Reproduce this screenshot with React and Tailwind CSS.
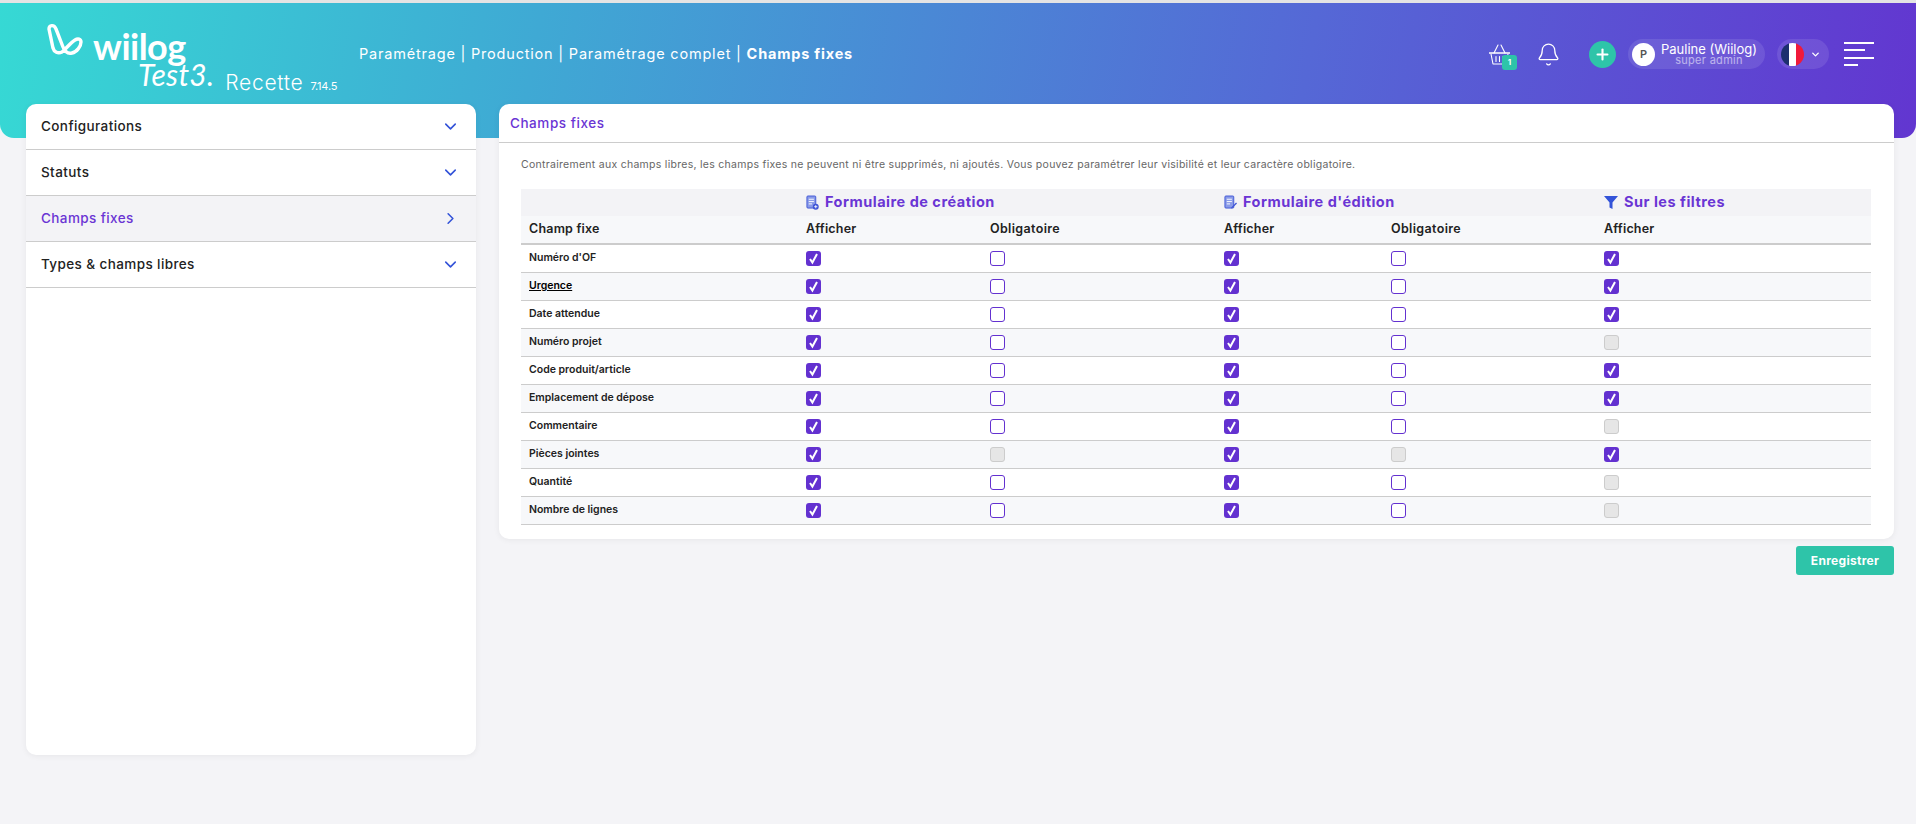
import { Bell, ChevronDown, ChevronRight, Plus } from "lucide-react";

const SIDE_ITEMS = [
  { label: "Configurations" },
  { label: "Statuts" },
  { label: "Champs fixes", active: true },
  { label: "Types & champs libres" },
];

// c = checked, u = unchecked, d = disabled
const ROWS = [
  { label: "Numéro d'OF", cells: "cucuc" },
  { label: "Urgence", cells: "cucuc", underline: true },
  { label: "Date attendue", cells: "cucuc" },
  { label: "Numéro projet", cells: "cucud" },
  { label: "Code produit/article", cells: "cucuc" },
  { label: "Emplacement de dépose", cells: "cucuc" },
  { label: "Commentaire", cells: "cucud" },
  { label: "Pièces jointes", cells: "cdcdc" },
  { label: "Quantité", cells: "cucud" },
  { label: "Nombre de lignes", cells: "cucud" },
];

function Box({ kind }) {
  if (kind === "c") {
    return (
      <span className="flex h-[15px] w-[15px] items-center justify-center rounded-[3px] bg-[#6331d0]">
        <svg viewBox="0 0 15 15" className="h-[15px] w-[15px]" fill="none" stroke="#fff" strokeWidth="2">
          <path d="M4 8l2.4 3.5L11 3" />
        </svg>
      </span>
    );
  }
  if (kind === "d") {
    return <span className="block h-[15px] w-[15px] rounded-[3px] border border-[#cccccc] bg-[#e6e6e6]" />;
  }
  return <span className="block h-[15px] w-[15px] rounded-[3px] border-[1.5px] border-[#6331d0] bg-white" />;
}

function LogoMark() {
  return (
    <svg viewBox="0 0 36 33" className="h-[33px] w-[36px] shrink-0" fill="none" stroke="#fff" strokeWidth="3.4" strokeLinecap="round">
      <path d="M2 6c0-4 5-5 7 0l7 18c2 5 5 7 9 6 5-1 9-7 9-11 0-3-3-4-6-2-5 3-9 9-13 12-4 2-8 0-9-4L2 6z" />
    </svg>
  );
}

function BasketIcon() {
  return (
    <svg viewBox="0 0 21 21" className="h-[21px] w-[21px]" fill="none" stroke="#fff" strokeWidth="1.1" strokeLinecap="round" strokeLinejoin="round">
      <path d="M5 9l4-8M16 9l-4-8" />
      <path d="M0.5 9h20" strokeWidth="1.6" />
      <path d="M2 10l2 10h13l2-10" />
      <path d="M7 12.5v5M10.5 12.5v5M14 12.5v5" />
    </svg>
  );
}

function FormIcon({ edit }) {
  return (
    <svg viewBox="0 0 14 16" className="h-[15px] w-[13px]">
      <rect x="1" y="1" width="9.5" height="13" rx="1" fill="#8a9be8" stroke="#3f55d6" strokeWidth="1" />
      <path d="M3 4.5h5.5M3 7h5.5M3 9.5h3.5" stroke="#fff" strokeWidth="1" />
      {edit ? (
        <path d="M8 13l5-5 1 1-5 5-1.5.5z" fill="#3f55d6" />
      ) : (
        <>
          <circle cx="10.5" cy="12.5" r="3.2" fill="#3f55d6" />
          <path d="M10.5 10.8v3.4M8.8 12.5h3.4" stroke="#fff" strokeWidth="0.9" />
        </>
      )}
    </svg>
  );
}

function FilterIcon() {
  return (
    <svg viewBox="0 0 14 14" className="h-[14px] w-[14px]">
      <path d="M0 1h14L8.5 7.5V14l-3-1.5v-5z" fill="#3353d8" />
    </svg>
  );
}

function GroupTitle({ icon, children }) {
  return (
    <div className="-mt-[1px] flex items-center gap-[6px] text-[14.5px] font-bold tracking-[0.5px] text-[#6a35d4]">
      {icon}
      <span>{children}</span>
    </div>
  );
}

function Header() {
  return (
    <div className="flex h-[135px] rounded-b-[14px] bg-[linear-gradient(100deg,#36d9d4_0%,#3fa9d4_28%,#5568d6_68%,#6236d0_100%)] pt-[20px] text-white">
      <div className="ml-[47px] w-[312px] shrink-0">
        <div className="flex items-start gap-[10px]">
          <LogoMark />
          <span className="mt-[4px] text-[36px] leading-[38px] font-bold tracking-[-0.5px] [font-family:Lato,sans-serif]">wiilog</span>
        </div>
        <div className="-mt-[2px] ml-[91px] flex items-baseline">
          <span className="-translate-y-[4px] text-[30px] leading-[30px] tracking-[0.3px] italic [font-family:Lato,sans-serif]">Test3.</span>
          <span className="ml-[11px] text-[21px] leading-[24px] font-light tracking-[0.7px]">Recette</span>
          <span className="ml-[7px] text-[11px] tracking-[-0.2px]">7.14.5</span>
        </div>
      </div>
      <div className="mt-[20px] text-[14.5px] leading-[22px] tracking-[0.8px] text-white">
        Paramétrage | Production | Paramétrage complet | <b className="font-bold">Champs fixes</b>
      </div>
      <div className="mt-[16px] mr-[42px] ml-auto flex h-[30px] items-center">
        <div className="relative">
          <BasketIcon />
          <span className="absolute top-[11px] left-[13px] flex h-[15px] w-[15px] items-center justify-center rounded-[3px] bg-[#2ec4a9] text-[8px] font-bold">1</span>
        </div>
        <Bell size={25} strokeWidth={1.2} className="ml-[26px]" />
        <span className="ml-[28px] flex h-[27px] w-[27px] items-center justify-center rounded-full bg-[#2ec4a9]">
          <Plus size={17} strokeWidth={3} />
        </span>
        <div className="ml-[12px] flex h-[30px] w-[137px] items-center rounded-full bg-white/10 pl-[4px]">
          <span className="flex h-[23px] w-[23px] items-center justify-center rounded-full bg-white text-[11px] font-semibold text-[#555]">P</span>
          <div className="ml-[4px] w-[100px] text-center">
            <div className="text-[13px] leading-[12px] whitespace-nowrap">Pauline (Wiilog)</div>
            <div className="text-[11px] leading-[10px] tracking-[0.3px] text-white/55">super admin</div>
          </div>
        </div>
        <div className="ml-[12px] flex h-[30px] w-[52px] items-center rounded-full bg-white/10 pl-[4px]">
          <svg viewBox="0 0 23 23" className="h-[23px] w-[23px]">
            <clipPath id="flag">
              <circle cx="11.5" cy="11.5" r="11.5" />
            </clipPath>
            <g clipPath="url(#flag)">
              <rect width="8" height="23" fill="#1c2f6e" />
              <rect x="8" width="7" height="23" fill="#fff" />
              <rect x="15" width="8" height="23" fill="#f0193a" />
            </g>
          </svg>
          <ChevronDown size={11} strokeWidth={3} className="ml-[6px]" />
        </div>
        <div className="ml-[15px] flex w-[30px] flex-col gap-[5.5px]">
          <span className="block h-[2px] w-[30px] bg-white" />
          <span className="block h-[2px] w-[21px] bg-white" />
          <span className="block h-[2px] w-[30px] bg-white" />
          <span className="block h-[2px] w-[14px] bg-white" />
        </div>
      </div>
    </div>
  );
}

function Sidebar() {
  return (
    <div className="h-[651px] w-[450px] shrink-0 overflow-hidden rounded-[10px] bg-white shadow-[0_1px_6px_rgba(0,0,0,0.06)]">
      {SIDE_ITEMS.map(item => (
        <div
          key={item.label}
          className={`flex h-[46px] items-center justify-between border-b border-[#cccccc] pr-[16px] pl-[15px] text-[13.5px] font-medium tracking-[0.4px] ${
            item.active ? "bg-[#f3f3f6] text-[#6a35d4]" : "text-[#222]"
          }`}>
          <span>{item.label}</span>
          {item.active ? (
            <ChevronRight size={19} strokeWidth={2} className="text-[#3353d8]" />
          ) : (
            <ChevronDown size={19} strokeWidth={2} className="text-[#3353d8]" />
          )}
        </div>
      ))}
    </div>
  );
}

function FieldsTable() {
  return (
    <table className="w-[1350px] table-fixed border-collapse">
      <colgroup>
        <col className="w-[277px]" />
        <col className="w-[184px]" />
        <col className="w-[234px]" />
        <col className="w-[167px]" />
        <col className="w-[213px]" />
        <col className="w-[275px]" />
      </colgroup>
      <thead>
        <tr className="h-[27px] bg-[#f3f3f6]">
          <th />
          <th colSpan={2} className="pl-[8px] text-left">
            <GroupTitle icon={<FormIcon />}>Formulaire de création</GroupTitle>
          </th>
          <th colSpan={2} className="pl-[8px] text-left">
            <GroupTitle icon={<FormIcon edit />}>Formulaire d'édition</GroupTitle>
          </th>
          <th className="pl-[8px] text-left">
            <GroupTitle icon={<FilterIcon />}>Sur les filtres</GroupTitle>
          </th>
        </tr>
        <tr className="h-[28px] border-b-2 border-[#cccccc] bg-[#f7f8fa] text-left text-[12.5px] font-semibold tracking-[0.2px] text-[#222]">
          <th className="pl-[8px] font-semibold">Champ fixe</th>
          <th className="pl-[8px] font-semibold">Afficher</th>
          <th className="pl-[8px] font-semibold tracking-[0.35px]">Obligatoire</th>
          <th className="pl-[8px] font-semibold">Afficher</th>
          <th className="pl-[8px] font-semibold tracking-[0.35px]">Obligatoire</th>
          <th className="pl-[8px] font-semibold">Afficher</th>
        </tr>
      </thead>
      <tbody>
        {ROWS.map((row, i) => (
          <tr key={row.label} className={`h-[28px] border-b border-[#cccccc] ${i % 2 ? "bg-[#f7f8fa]" : "bg-white"}`}>
            <td className={`pl-[8px] text-[10.5px] font-semibold text-[#222] ${row.underline ? "text-black underline" : ""}`}>{row.label}</td>
            {row.cells.split("").map((kind, j) => (
              <td key={j} className="pl-[8px]">
                <Box kind={kind} />
              </td>
            ))}
          </tr>
        ))}
      </tbody>
    </table>
  );
}

export default function App() {
  return (
    <div className="min-h-[824px] overflow-hidden bg-[#f4f4f7] [font-family:Inter,sans-serif]">
      <div className="h-[3px] bg-[#e4e4e4]" />
      <Header />
      <div className="relative -mt-[34px] flex gap-[23px] pr-[22px] pl-[26px]">
        <Sidebar />
        <div className="min-w-0 flex-1">
          <div className="h-[435px] rounded-[10px] bg-white shadow-[0_1px_6px_rgba(0,0,0,0.06)]">
            <div className="flex h-[39px] items-center border-b border-[#cccccc] pl-[11px] text-[13.5px] font-medium tracking-[0.55px] text-[#6a35d4]">
              Champs fixes
            </div>
            <div className="px-[22px]">
              <p className="mt-[14px] mb-[16px] text-[10.5px] leading-[16px] tracking-[0.28px] text-[#666]">
                Contrairement aux champs libres, les champs fixes ne peuvent ni être supprimés, ni ajoutés. Vous pouvez paramétrer leur visibilité et leur caractère obligatoire.
              </p>
              <FieldsTable />
            </div>
          </div>
          <div className="mt-[7px] flex justify-end">
            <button className="h-[29px] w-[98px] rounded-[3px] bg-[#2ec4a9] text-[12px] font-bold tracking-[0.3px] text-white">
              Enregistrer
            </button>
          </div>
        </div>
      </div>
    </div>
  );
}
